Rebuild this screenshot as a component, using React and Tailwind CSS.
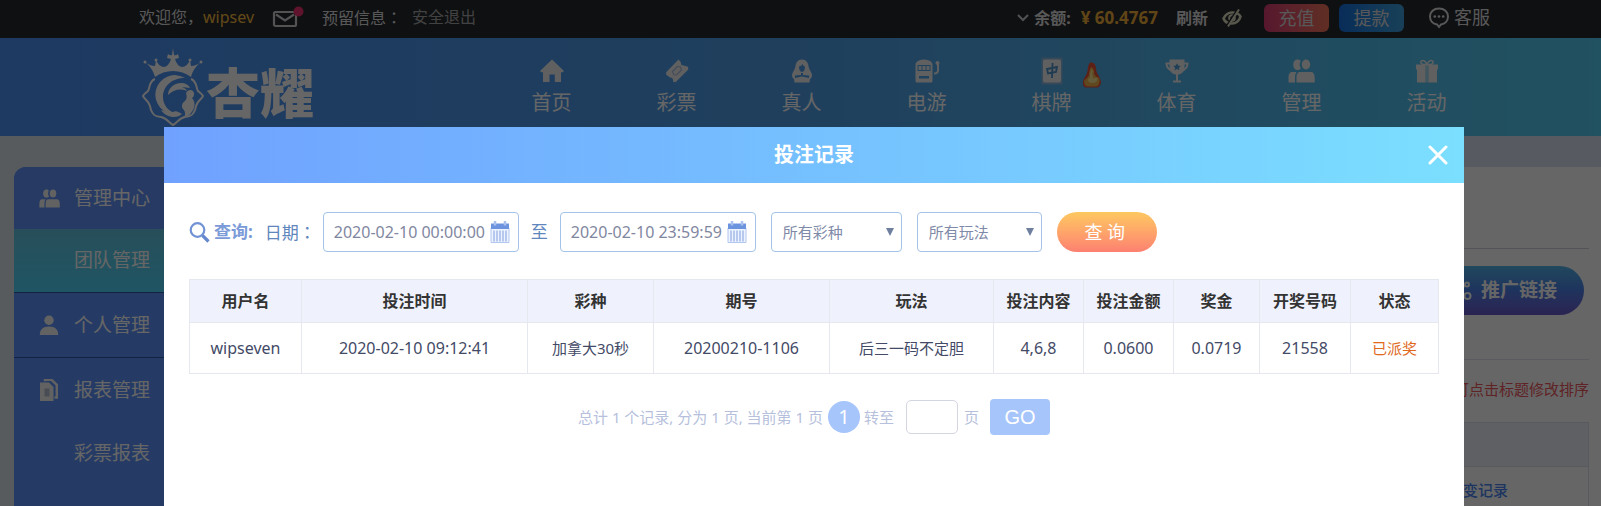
import React from "react";

const navItems = [
  { label: "首页", icon: HomeIcon },
  { label: "彩票", icon: TicketIcon },
  { label: "真人", icon: DealerIcon },
  { label: "电游", icon: SlotIcon },
  { label: "棋牌", icon: TileIcon, hot: true },
  { label: "体育", icon: TrophyIcon },
  { label: "管理", icon: PeopleIcon },
  { label: "活动", icon: GiftIcon },
];

const columns = [
  { title: "用户名", value: "wipseven", width: "w-[112px]", cell: "text-[16px]" },
  { title: "投注时间", value: "2020-02-10 09:12:41", width: "w-[226px]", cell: "text-[16px]" },
  { title: "彩种", value: "加拿大30秒", width: "w-[126px]", cell: "text-[15px]" },
  { title: "期号", value: "20200210-1106", width: "w-[176px]", cell: "text-[16px]" },
  { title: "玩法", value: "后三一码不定胆", width: "w-[164px]", cell: "text-[15px]" },
  { title: "投注内容", value: "4,6,8", width: "w-[90px]", cell: "text-[16px]" },
  { title: "投注金额", value: "0.0600", width: "w-[90px]", cell: "text-[16px]" },
  { title: "奖金", value: "0.0719", width: "w-[86px]", cell: "text-[16px]" },
  { title: "开奖号码", value: "21558", width: "w-[91px]", cell: "text-[16px]" },
  { title: "状态", value: "已派奖", width: "w-[88px]", cell: "text-[15px] text-[#e0691e]" },
];

function HomeIcon() {
  return (
    <svg viewBox="0 0 24 24" className="size-6" fill="currentColor">
      <path d="M12 .5 24 12l-1.2 1.2H21V23h-6.200v-7.500H9.500V23H3v-9.800H1.200L0 12z" />
    </svg>
  );
}

function TicketIcon() {
  return (
    <svg viewBox="0 0 24 24" className="size-6" fill="currentColor">
      <path d="M13.500.5 16 3.500c-.5 1.800.8 3.200 2.700 3L23 7.800l.3 2.700L10.500 23.300 8 22.500c.6-2.300-.6-4.200-3-4L1 15.500l.2-2.300z" />
      <path d="m12.500 7.500-5 5 1.200 3.300 2.800.2 5-5-1.200-3.300z" fill="none" stroke="#a9bedd" strokeWidth="1.200" />
    </svg>
  );
}

function DealerIcon() {
  return (
    <svg viewBox="0 0 24 24" className="size-6" fill="currentColor">
      <path
        fillRule="evenodd"
        d="M12 .5c4.200 0 6 3 6.500 6.500.4 3 1.700 4.500 3 7 1 2.500.5 5-1.500 6l-.5 3.500h-15L4 20c-2-1-2.500-3.500-1.500-6 1.300-2.500 2.600-4 3-7C6 3.500 7.800.5 12 .5zM9 7.500c0 3 1 5.500 3 5.500s3-2.500 3-5.500C13.500 7.500 13 6 12.500 5 11.500 6.500 10.500 7.500 9 7.500zM11 14v2l-6 .5v2.500l7-1.500 7 1.500v-2.500l-6-.5v-2z"
      />
    </svg>
  );
}

function SlotIcon() {
  return (
    <svg viewBox="0 0 26 24" className="h-6 w-[26px]" fill="currentColor">
      <path
        fillRule="evenodd"
        d="M5 1.500Q9.500-.5 15 1.500C17.500 2.500 18.500 4 18.500 6v16q0 1.500-1.500 1.500H3Q1.500 23.500 1.500 22V6c0-2 1-3.500 3.500-4.500zM3.500 6v6h13V6zm1 1h3v4h-3zm4 0h3v4h-3zm4 0h3v4h-3zM5 17v2.500h10V17z"
      />
      <path d="M24 4v7.500q0 3-4 3" fill="none" stroke="currentColor" strokeWidth="2" />
      <circle cx="23.500" cy="4" r="2" />
    </svg>
  );
}

function TileIcon() {
  return (
    <svg viewBox="0 0 22 28" className="h-7 w-[22px]">
      <path d="M.5.5h21v27H.5z" fill="#8ab7dc" />
      <rect x="2" y="2.500" width="18" height="23" rx="2" fill="currentColor" />
      <path
        d="m6 12 10-2-1 5-8 1.500zM11.500 6l-.5 15"
        fill="none"
        stroke="#4e93cc"
        strokeWidth="1.800"
      />
    </svg>
  );
}

function TrophyIcon() {
  return (
    <svg viewBox="0 0 24 24" className="size-6" fill="currentColor">
      <path d="M4.500.5h15V8c0 4-2 6.500-5.500 7.500h-1v6h3v2H8v-2h3v-6h-1C6.500 14.500 4.500 12 4.500 8z" />
      <path
        d="M5 4.500H1.500c0 3.500 1.500 5.500 5 7M19 4.500h3.500c0 3.500-1.500 5.500-5 7"
        fill="none"
        stroke="currentColor"
        strokeWidth="2"
      />
      <path
        d="m12 4.200 1.200 2.400 2.600.3-1.900 1.800.5 2.600-2.400-1.200-2.400 1.200.5-2.600-1.900-1.800 2.600-.3z"
        fill="#4f9fd6"
      />
    </svg>
  );
}

function PeopleIcon({ className = "h-6 w-[27px]" }) {
  return (
    <svg viewBox="0 0 27 24" className={className} fill="currentColor">
      <path d="M9.500.5C11 .5 12 1 12.700 2c-1.500 2-1.300 5.500.3 7.500-.8.900-2 1.500-3.500 1.500C6.700 11 5.300 8.500 5.300 5.700S6.700.5 9.500.5z" />
      <ellipse cx="18" cy="5.500" rx="4.200" ry="5" />
      <path d="M4 13h4.500C7.500 14.500 7 16 7 18v5.500H.5V19c0-3.500 1-6 3.500-6zM12 13h11c2.500 0 3.700 2.500 3.700 6v4.500H8.500V19c0-3.500 1-6 3.500-6z" />
    </svg>
  );
}

function GiftIcon() {
  return (
    <svg viewBox="0 0 24 24" className="size-6" fill="currentColor">
      <path
        d="M12 5.500C10.500 2 8 .8 6.500 1.800S6 5 8 5.500h8c2-.5 3-2.700 1.500-3.700S13.500 2 12 5.500z"
        fill="none"
        stroke="currentColor"
        strokeWidth="1.500"
      />
      <path d="M1 5.500h9.500v5H1zM13.500 5.500H23v5h-9.500zM2 10h8.500v13.500H2zM13.500 10H22v13.500h-8.500z" />
      <path d="M10.500 6h3v17.500h-3z" opacity=".5" />
    </svg>
  );
}

function FlameIcon() {
  return (
    <svg viewBox="0 0 20 26" className="h-[26px] w-5">
      <path d="M8 .5c4-.5 6 2 6 6.500.5 5 4.500 8 5 13 0 3-2 5.500-4 5.500H4.500C2 25.500.5 23 1 20c.5-4.500 4-6.500 4.500-11C5.800 6 6 3 8 .5z" fill="#e8503a" />
      <path d="M9.500 5c2.500 1.500 3 4.500 2.500 7 1.500 2 2.500 3 5 4 1.500 3.500 0 8.500-3 8.500H6c-3 0-4.500-3-3.500-6.500C4.500 16.500 7 15 7 12c.5-3 .5-5 2.500-7z" fill="#f2b24c" />
      <path d="M9.500 7c1.500 2 1 4 .5 5 1 1.500.5 3.500 1.500 4.500 1.500 0 3-1 4-.5.5 3-2 5-5 5s-4.500-1.500-4.500-3.500c1.500-2 2.500-3 2-5.500.5-1 .5-3 1.500-5z" fill="#f7e48f" />
    </svg>
  );
}

function UserIcon() {
  return (
    <svg viewBox="0 0 20 20" className="size-5" fill="currentColor">
      <circle cx="10" cy="5.200" r="4.700" />
      <path d="M.8 20c0-5.500 3-8.500 9.200-8.500s9.200 3 9.200 8.500z" />
    </svg>
  );
}

function ReportIcon() {
  return (
    <svg viewBox="0 0 20 22" className="h-[22px] w-5" fill="currentColor">
      <path d="M1 3.500h9l4.500 4.500V22H1z" />
      <path d="M6 2.200V.8h6.500l5.300 5V18.500H15.500" fill="none" stroke="currentColor" strokeWidth="2.500" />
      <path d="M5.500 9.500h5v8h-5z" fill="#b4bed3" />
    </svg>
  );
}

function Logo() {
  return (
    <a href="#home" className="flex items-end text-white" aria-label="杏耀">
      <svg viewBox="0 0 64 82" className="h-[82px] w-16">
        <g fill="currentColor">
          <path d="M14 31C12 24 9 20 4 16q5 4 10 4l1-6q3 7 8 7 5-1 7-8l-4-1 1-4q2 2 4 1l1-7 1 7q2 1 4-1l1 4-4 1q2 7 7 8 5 0 8-7l1 6q5 0 10-4c-5 4-8 8-10 15-10-8-26-8-36 0z" />
          <circle cx="4" cy="16" r="1.500" />
          <circle cx="60" cy="16" r="1.500" />
          <circle cx="15" cy="14" r="1.500" />
          <circle cx="49" cy="14" r="1.500" />
          <path d="M44 32A19.500 19.500 0 1 0 36 68c-9-3-14-9-14-17 0-11 9-19 22-19z" />
          <path d="M27 49c0-7 6-12 13-12 4 0 8 2 9 5l-8-1c3 1 5 3 5 4-7-3-14-1-19 4z" />
          <path d="M45 47c2-4 7-4 8 0 0 2 0 4-2 5 4 4 3 11-1 15-1 2-4 4-7 4 2-3 1-6-1-8-2-3-1-6 2-8 2-2 2-5 1-8z" />
          <path d="M20 64c5 1 8 4 12 2 3-2 6 0 9 2-5 5-16 4-21-4z" />
        </g>
        <path
          d="M14 33C8 35 9 42 7 45 5 47 3 48 2 50c1 3 6 5 7 10 1 8 6 11 11 11 6 1 8 6 12 8 4-2 6-7 12-8 5 0 10-3 11-11 1-5 6-7 7-10-1-2-3-3-5-5-2-3-1-10-7-12"
          fill="none"
          stroke="currentColor"
          strokeWidth="2"
        />
      </svg>
      <span className="pb-2 pl-px text-[54px] leading-[54px] font-black">杏耀</span>
    </a>
  );
}

function CenteredMark({ children }) {
  return <span className="font-['Noto_Sans_CJK_TC',sans-serif]">{children}</span>;
}

function TopBar() {
  return (
    <div className="flex h-[38px] items-center bg-[#26282d] pr-[111px] pb-1 pl-[139px] text-[16px] text-[#ddd]">
      <span className="whitespace-nowrap">
        欢迎您，<span className="text-[#f5b83d]">wipsev</span>
      </span>
      <a href="#mail" aria-label="消息" className="ml-[18px]">
        <svg viewBox="0 0 32 22" className="h-[22px] w-8">
          <rect x="2" y="6" width="22" height="14" rx="1.500" fill="none" stroke="#d0d0d0" strokeWidth="2.200" />
          <path d="m4 8.500 9 6 9-6" fill="none" stroke="#d0d0d0" strokeWidth="2.200" />
          <circle cx="26.500" cy="5.500" r="5" fill="#f0306e" />
        </svg>
      </a>
      <span className="ml-[18px] whitespace-nowrap">
        预留信息<CenteredMark>：</CenteredMark>
      </span>
      <a href="#logout" className="ml-[10px] whitespace-nowrap text-[#a5a5a5]">安全退出</a>

      <div className="ml-auto flex items-center pt-px whitespace-nowrap">
        <svg viewBox="0 0 12 8" className="mr-[5px] h-2 w-3">
          <path d="m1 1 5 5 5-5" fill="none" stroke="#ccc" strokeWidth="2" />
        </svg>
        <span className="font-bold">余额:</span>
        <span className="ml-[10px] text-[17px] font-bold text-[#f0ae38]">¥ 60.4767</span>
        <button type="button" className="ml-[18px] font-bold">刷新</button>
        <button type="button" aria-label="隐藏余额" className="ml-[14px]">
          <svg viewBox="0 0 20 18" className="h-[18px] w-5">
            <path d="M1.500 9.500c2-4 5-6 8.500-6s7 1 8.500 4c-1 4.500-5 7-8.500 7s-7-1-8.500-5z" fill="none" stroke="#dedbc0" strokeWidth="2.600" />
            <circle cx="10" cy="9" r="2.800" fill="none" stroke="#dedbc0" strokeWidth="2" />
            <path d="M16 .5 5 17.500" stroke="#26282d" strokeWidth="3" />
            <path d="M17 .5 6 17.500" stroke="#dedbc0" strokeWidth="2" />
          </svg>
        </button>
        <button type="button" className="ml-[22px] h-7 w-[65px] rounded-md bg-linear-to-r from-[#d83a72] to-[#f0735a] text-[18px] leading-7">充值</button>
        <button type="button" className="ml-[10px] h-7 w-[65px] rounded-md bg-linear-to-r from-[#1670dc] to-[#3fa0dc] text-[18px] leading-7">提款</button>
        <a href="#service" className="ml-6 flex items-center gap-1 text-[18px]">
          <svg viewBox="0 0 22 22" className="size-[22px]">
            <path d="M11 1.500c5.300 0 9 3.300 9 8s-3.300 7.600-7 8L11 20l-2-2.500c-3.700-.4-7-3.300-7-8s3.700-8 9-8z" fill="none" stroke="#ddd" strokeWidth="2" />
            <circle cx="6.800" cy="9.500" r="1.300" fill="#ddd" />
            <circle cx="11" cy="9.500" r="1.300" fill="#ddd" />
            <circle cx="15.200" cy="9.500" r="1.300" fill="#ddd" />
          </svg>
          客服
        </a>
      </div>
    </div>
  );
}

function MainNav() {
  return (
    <header className="flex h-[98px] items-start justify-between bg-linear-to-r from-[#4c8ff5] via-[#4f9fe8] to-[#54ccf2] pr-[112px] pl-[141px]">
      <div className="pt-2">
        <Logo />
      </div>
      <nav className="flex">
        {navItems.map(({ label, icon: Icon, hot }) => (
          <a
            key={label}
            href="#nav"
            className="relative flex w-[125px] flex-col items-center gap-[3px] pt-[19px] text-[20px] leading-[30px] text-white"
          >
            <span className="flex h-7 items-center text-[#f0f0f0]">
              <Icon />
            </span>
            <span>{label}</span>
            {hot && (
              <span className="absolute top-6 right-3">
                <FlameIcon />
              </span>
            )}
          </a>
        ))}
      </nav>
    </header>
  );
}

function SideItem({ label, icon, className }) {
  return (
    <a href="#side" className={`flex items-center pl-[23px] text-[19px] text-white ${className}`}>
      <span className="flex w-6 justify-center text-[#f5f5f5]">{icon}</span>
      <span className="pl-[13px]">{label}</span>
    </a>
  );
}

function Sidebar() {
  return (
    <aside className="w-[220px] overflow-hidden rounded-t-xl bg-[#5d94fc]">
      <SideItem label="管理中心" icon={<PeopleIcon className="h-[19px] w-[21px]" />} className="h-[62px] bg-[#5f92f8]" />
      <SideItem label="团队管理" className="h-[63px] bg-linear-to-b from-[#62c4e0] to-[#4ed4fa]" />
      <SideItem label="个人管理" icon={<UserIcon />} className="h-[66px] border-y border-[#315aa8]" />
      <SideItem label="报表管理" icon={<ReportIcon />} className="h-16" />
      <SideItem label="彩票报表" className="h-[62px]" />
    </aside>
  );
}

function Content() {
  return (
    <main className="flex flex-1 flex-col items-end bg-white pr-3">
      <div className="h-[82px] w-full border-b border-[#ccd0d8]" />
      <button
        type="button"
        className="mt-[17px] mr-[5px] flex h-[49px] w-[160px] items-center justify-end gap-2 rounded-full bg-linear-to-b from-[#54b4e8] via-[#4c80e8] to-[#6a58cc] pr-[27px] text-[19px] font-bold text-white"
      >
        <svg viewBox="0 0 20 20" className="size-5" fill="none" stroke="currentColor" strokeWidth="2">
          <circle cx="4" cy="9" r="2.500" />
          <circle cx="14" cy="3.500" r="2" />
          <circle cx="14.500" cy="15" r="3" />
          <path d="m6 8 6.500-3.500M6 10.500l6 3" />
        </svg>
        推广链接
      </button>
      <div className="h-[45px] w-full border-b border-[#e2e4ea]" />
      <p className="pt-[18px] pb-[22px] text-[15px] leading-[22px] text-[#f0585c]">可点击标题修改排序</p>
      <div className="h-[45px] w-full border border-[#dfe2ea] bg-[#eef1fb]" />
      <div className="flex w-full flex-1 items-start justify-end border-x border-[#dfe2ea] pt-3 pr-20">
        <a href="#records" className="text-[15px] font-medium text-[#4a86f0]">账变记录</a>
      </div>
    </main>
  );
}

function DateField({ id, label, value }) {
  return (
    <div className="flex h-10 w-[196px] items-center rounded-[4px] border border-[#a3c3e8] bg-white pr-2 pl-[10px]">
      <input
        id={id}
        type="text"
        aria-label={label}
        defaultValue={value}
        className="min-w-0 flex-1 bg-transparent text-[16px] text-[#7f879f] outline-none"
      />
      <svg viewBox="0 0 20 22" className="h-[22px] w-5 shrink-0">
        <path d="M1 7h18v14.500H1z" fill="#edf3ff" stroke="#b3c6ee" />
        <path d="M1 2.500h18V8H1z" fill="#6c93dd" />
        <path d="M5 0v4.500M15 0v4.500" stroke="#a9c0ee" strokeWidth="2.500" />
        <path d="M4 9.500v11M7 9.500v11M10 9.500v11M13 9.500v11M16 9.500v11" stroke="#9fb6e6" strokeWidth="1.400" />
      </svg>
    </div>
  );
}

function SelectField({ label, width }) {
  return (
    <div className={`relative ${width}`}>
      <select
        aria-label={label}
        className="h-10 w-full appearance-none rounded-[4px] border border-[#a3c3e8] bg-white pl-[11px] text-[15px] text-[#7f8aa8] outline-none"
      >
        <option>{label}</option>
      </select>
      <svg viewBox="0 0 8 8" className="pointer-events-none absolute top-4 right-2 size-2">
        <path d="M0 0h8L4 8z" fill="#6f809f" />
      </svg>
    </div>
  );
}

function BetRecords() {
  return (
    <section
      role="dialog"
      aria-labelledby="dialog-title"
      className="flex w-full flex-col bg-white"
    >
      <div className="flex h-14 shrink-0 items-center bg-linear-to-r from-[#70a1ff] to-[#7bdfff] px-4">
        <span className="w-5" />
        <h1 id="dialog-title" className="flex-1 text-center text-[20px] font-bold text-white">投注记录</h1>
        <button type="button" aria-label="关闭" className="text-white">
          <svg viewBox="0 0 20 20" className="size-5">
            <path d="m2 2 16 16M18 2 2 18" stroke="currentColor" strokeWidth="3" strokeLinecap="round" />
          </svg>
        </button>
      </div>

      <div className="px-[25px] pt-[29px]">
        <form className="flex items-center whitespace-nowrap text-[17px] text-[#5f86bd]">
          <svg viewBox="0 0 21 21" className="size-[21px]">
            <circle cx="8.500" cy="8" r="6.800" fill="none" stroke="#7192d4" strokeWidth="2.200" />
            <path d="m13.500 13.500 6 6" stroke="#6688cf" strokeWidth="3.200" />
          </svg>
          <span className="ml-1 font-bold text-[#7b9bd8]">查询:</span>
          <label htmlFor="date-from" className="ml-3">
            日期<CenteredMark>：</CenteredMark>
          </label>
          <div className="ml-[7px]">
            <DateField id="date-from" label="开始日期" value="2020-02-10 00:00:00" />
          </div>
          <label htmlFor="date-to" className="mx-3">至</label>
          <DateField id="date-to" label="结束日期" value="2020-02-10 23:59:59" />
          <div className="ml-[15px] flex gap-[15px]">
            <SelectField label="所有彩种" width="w-[131px]" />
            <SelectField label="所有玩法" width="w-[125px]" />
          </div>
          <button
            type="button"
            className="ml-[15px] h-10 w-[100px] rounded-full bg-linear-to-b from-[#fdc860] to-[#fc8070] pr-1 text-[18px] text-white"
          >
            查 询
          </button>
        </form>

        <table className="mt-[27px] w-full table-fixed border-collapse text-center">
          <thead>
            <tr className="h-[43px] bg-[#eff2fc] text-[16px] text-[#333]">
              {columns.map((c) => (
                <th key={c.title} className={`border border-[#e6e8ef] font-bold ${c.width}`}>{c.title}</th>
              ))}
            </tr>
          </thead>
          <tbody>
            <tr className="h-[51px] text-[#434a66]">
              {columns.map((c) => (
                <td key={c.title} className={`border border-[#e6e8ef] ${c.cell}`}>{c.value}</td>
              ))}
            </tr>
          </tbody>
        </table>

        <div className="mt-[25px] flex items-center justify-center whitespace-nowrap text-[15px] text-[#b6bfdc]">
          <span>总计 1 个记录, 分为 1 页, 当前第 1 页</span>
          <button type="button" className="mr-1 ml-[5px] size-8 rounded-full bg-[#a6c5fb] text-[20px] leading-8 text-white">1</button>
          <label htmlFor="page-number">转至</label>
          <input id="page-number" type="text" className="mr-[6px] ml-3 h-[34px] w-[52px] rounded-[5px] border border-[#d3d6e0]" />
          <span>页</span>
          <button type="button" className="ml-[11px] h-9 w-[60px] rounded-[4px] bg-[#a6c5fb] font-['Liberation_Sans',sans-serif] text-[20px] text-white">GO</button>
        </div>
      </div>
    </section>
  );
}

export default function App() {
  return (
    <div className="flex min-h-screen flex-col bg-[#dbe3f2] font-['Noto_Sans','Noto_Sans_CJK_SC',sans-serif]">
      <TopBar />
      <MainNav />
      <div className="flex flex-1 bg-linear-to-r from-[#dce4ea] to-[#dbe1f4] pt-[31px] pl-[14px]">
        <Sidebar />
        <Content />
      </div>
      <div className="fixed inset-0 flex overflow-hidden bg-black/60 pt-[127px] pr-[137px] pl-[164px]">
        <BetRecords />
      </div>
    </div>
  );
}
